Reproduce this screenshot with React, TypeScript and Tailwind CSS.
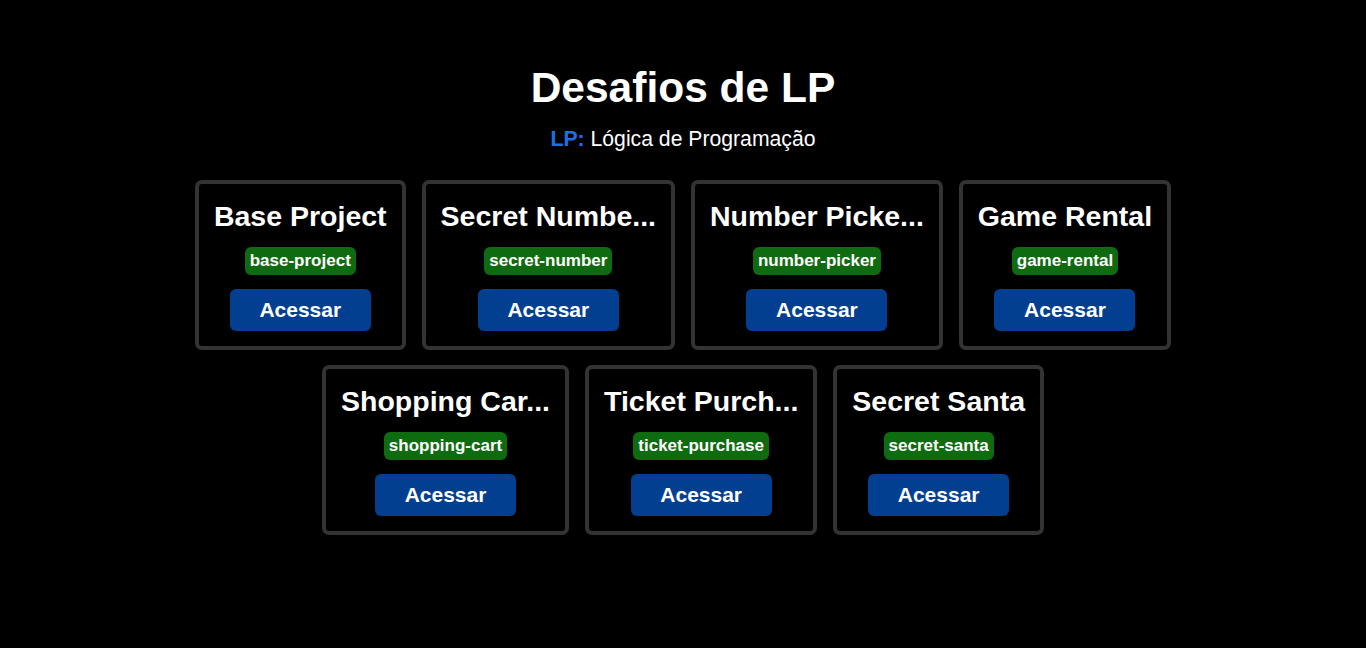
const challenges = [
  { name: "Base Project", slug: "base-project" },
  { name: "Secret Number", slug: "secret-number" },
  { name: "Number Picker", slug: "number-picker" },
  { name: "Game Rental", slug: "game-rental" },
  { name: "Shopping Cart", slug: "shopping-cart" },
  { name: "Ticket Purchase", slug: "ticket-purchase" },
  { name: "Secret Santa", slug: "secret-santa" },
];

// long names get cut after 12 chars
const shortName = (name: string) => (name.length > 12 ? name.slice(0, 12) + "..." : name);

const ChallengeCard = ({ name, slug }: { name: string; slug: string }) => {
  return (
    <div className="flex flex-col items-center border-4 border-[#333333] rounded-[7px] pt-[16px] px-[15px] pb-[15px] bg-black">
      <h2 className="text-[28.5px] font-bold text-white leading-[32px] whitespace-nowrap mb-[15px]">
        {shortName(name)}
      </h2>
      <span className="bg-[#0f6b0f] text-white font-bold text-[17px] leading-[20px] px-[5px] py-[4px] rounded-[6px] mb-[14px]">
        {slug}
      </span>
      <button className="bg-[#033f91] text-white font-bold text-[21px] leading-[24px] w-[141px] py-[9px] rounded-[6px]">
        Acessar
      </button>
    </div>
  );
};

export default function App() {
  return (
    <div
      className="min-h-screen bg-black text-white flex flex-col items-center pt-[64px]"
      style={{ fontFamily: '"Liberation Sans", Arial, sans-serif' }}
    >
      <h1 className="text-[42.5px] font-bold leading-[48px] mb-[15px]">Desafios de LP</h1>
      <p className="text-[21.2px] leading-[24px] mb-[29px]">
        <span className="font-bold text-[#1e6fe6]">LP:</span> Lógica de Programação
      </p>

      <div className="flex flex-wrap justify-center gap-x-[16px] gap-y-[15px] max-w-[1100px]">
        {challenges.map((c) => (
          <ChallengeCard key={c.slug} name={c.name} slug={c.slug} />
        ))}
      </div>
    </div>
  );
}
